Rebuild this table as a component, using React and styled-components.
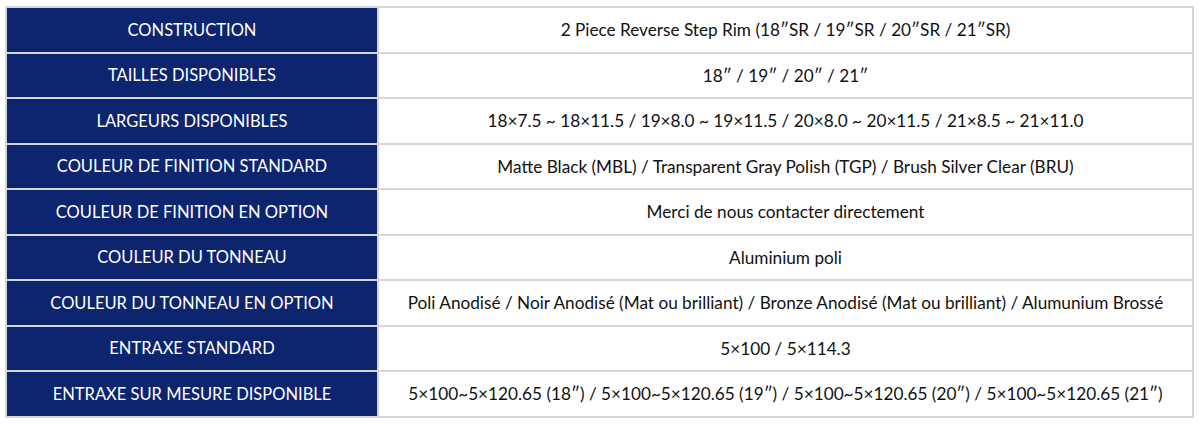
import React from 'react'
import styled, { createGlobalStyle } from 'styled-components'

const GlobalStyle = createGlobalStyle`
  body {
    margin: 0;
    background: #ffffff;
    font-family: 'Lato', 'Open Sans', sans-serif;
  }
`

const Wrapper = styled.div`
  padding: 6px 6px 0 5px;
`

const Table = styled.table`
  width: 100%;
  border-collapse: collapse;
  table-layout: fixed;
`

const Row = styled.tr`
  height: 45.5px;
`

const Label = styled.th`
  box-sizing: border-box;
  width: 372px;
  background: #0d246f;
  color: #ffffff;
  font-weight: 400;
  font-size: 16.5px;
  text-align: center;
  border: 2px solid #d6d6d6;
  padding: 0 4px;
`

const Value = styled.td`
  color: #111111;
  font-size: 17.2px;
  text-align: center;
  border: 2px solid #d6d6d6;
  padding: 0 4px;
  white-space: nowrap;
`

const rows = [
  ['CONSTRUCTION', '2 Piece Reverse Step Rim (18\u2033SR / 19\u2033SR / 20\u2033SR / 21\u2033SR)'],
  ['TAILLES DISPONIBLES', '18\u2033 / 19\u2033 / 20\u2033 / 21\u2033'],
  ['LARGEURS DISPONIBLES', '18\u00d77.5 ~ 18\u00d711.5 / 19\u00d78.0 ~ 19\u00d711.5 / 20\u00d78.0 ~ 20\u00d711.5 / 21\u00d78.5 ~ 21\u00d711.0'],
  ['COULEUR DE FINITION STANDARD', 'Matte Black (MBL) / Transparent Gray Polish (TGP) / Brush Silver Clear (BRU)'],
  ['COULEUR DE FINITION EN OPTION', 'Merci de nous contacter directement'],
  ['COULEUR DU TONNEAU', 'Aluminium poli'],
  ['COULEUR DU TONNEAU EN OPTION', 'Poli Anodisé / Noir Anodisé (Mat ou brilliant) / Bronze Anodisé (Mat ou brilliant) / Alumunium Brossé'],
  ['ENTRAXE STANDARD', '5\u00d7100 / 5\u00d7114.3'],
  ['ENTRAXE SUR MESURE DISPONIBLE', '5\u00d7100~5\u00d7120.65 (18\u2033) / 5\u00d7100~5\u00d7120.65 (19\u2033) / 5\u00d7100~5\u00d7120.65 (20\u2033) / 5\u00d7100~5\u00d7120.65 (21\u2033)']
]

export default function App() {
  return (
    <>
      <GlobalStyle />
      <Wrapper>
        <Table>
          <tbody>
            {rows.map(([label, value]) => (
              <Row key={label}>
                <Label>{label}</Label>
                <Value>{value}</Value>
              </Row>
            ))}
          </tbody>
        </Table>
      </Wrapper>
    </>
  )
}
